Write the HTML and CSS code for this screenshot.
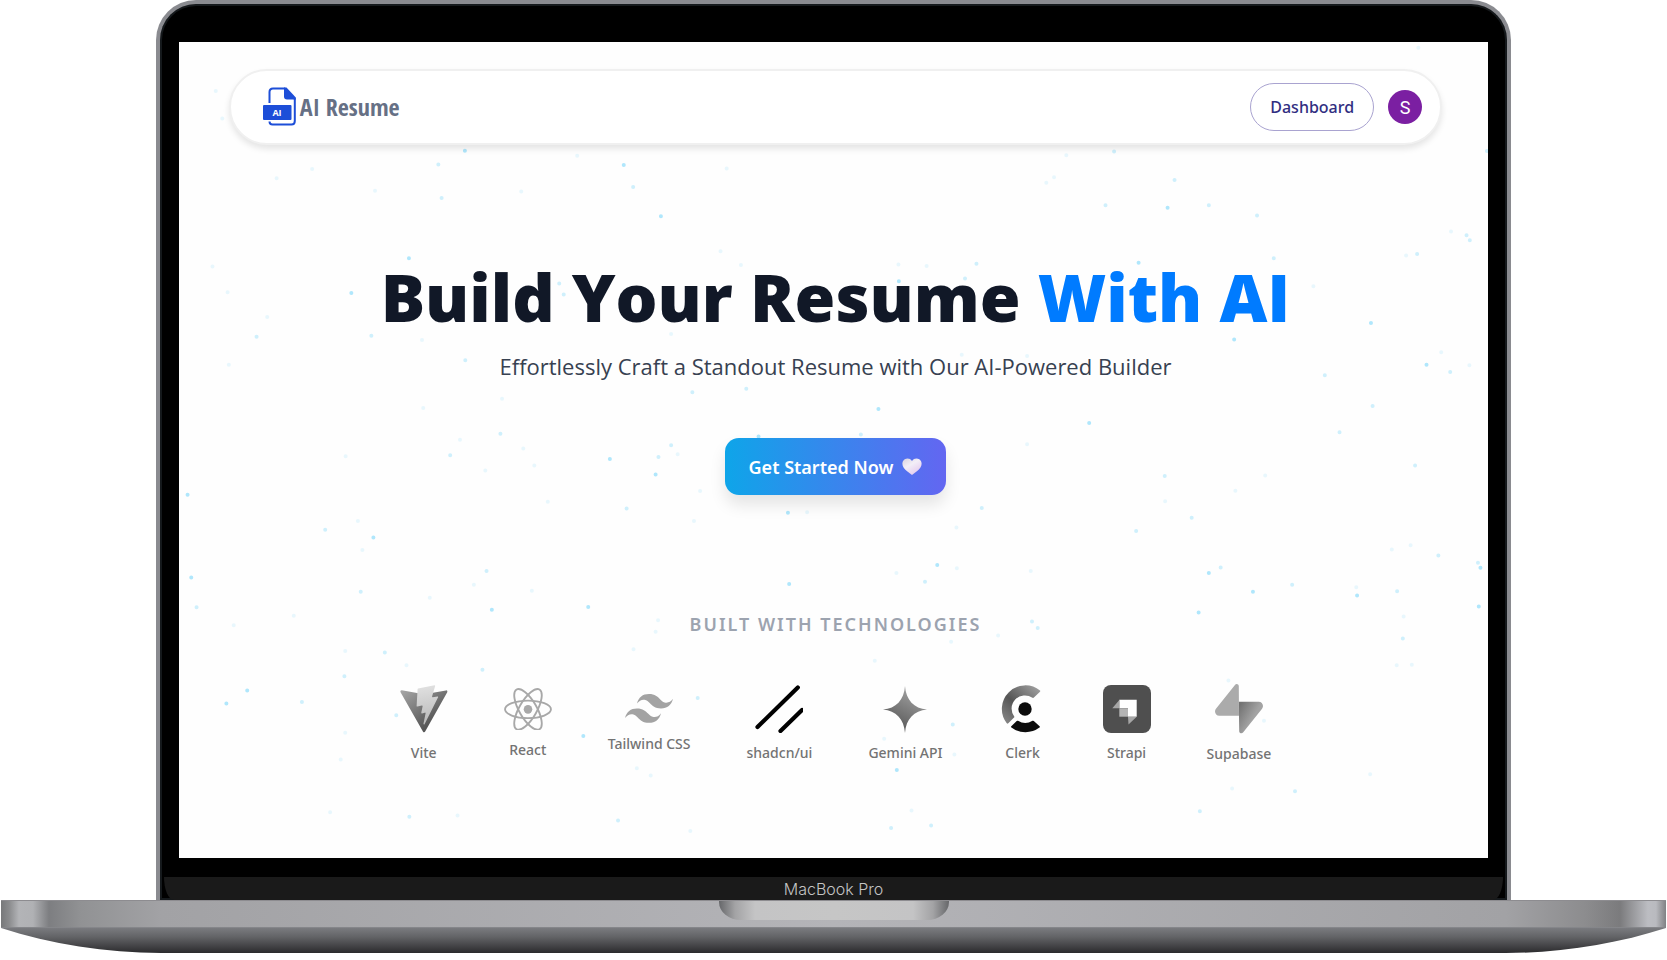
FILE: index.html
```html
<!DOCTYPE html>
<html lang="en">
<head>
<meta charset="utf-8">
<meta name="viewport" content="width=device-width, initial-scale=1">
<title>AI Resume</title>
<link rel="stylesheet" href="styles.css">
</head>
<body>
<div class="laptop">
  <div class="lid">
    <div class="screen">
      <svg class="particles" viewBox="0 0 1308 817" preserveAspectRatio="xMidYMin slice" aria-hidden="true">
        <g transform="translate(0 98) scale(.408 .459)">
          <path class="dot dot-strong" d="M700 23h0M1089 54h0M1180 166h0M563 257h0M422 333h0M1055 694h0M1167 728h0M21 772h0M476 865h0M30 952h0M766 1022h0M167 1198h0M116 1226h0M990 1297h0M1419 645h0M1494 966h0M1491 811h0M1002 1016h0"/>
          <path class="dot dot-mid" d="M635 53h0M643 126h0M1112 102h0M931 312h0M190 428h0M471 426h0M1389 541h0M787 639h0M664 686h0M1096 802h0M43 1017h0M445 983h0M504 1115h0M405 1167h0M532 1252h0M1270 1214h0M753 938h0M358 848h0M1257 549h0M701 479h0M1174 690h0M1205 664h0M301 1223h0M743 1153h0M1075 1481h0M564 1473h0M942 336h0"/>
          <path class="dot dot-faint" d="M326 63h0M975 34h0M1341 62h0M480 110h0M838 112h0M82 275h0M119 331h0M1376 272h0M1205 422h0M122 489h0M598 583h0M791 563h0M843 671h0M408 688h0M870 708h0M903 787h0M1276 764h0M1221 684h0M438 829h0M449 892h0M722 968h0M864 981h0M614 996h0M281 1035h0M134 1056h0M407 1112h0M557 1143h0M407 1290h0M396 1348h0M1121 1367h0M1155 1383h0M1252 1504h0M682 1470h0M370 1463h0M1261 829h0M1538 810h0M1113 1108h0M595 435h0M216 385h0M1326 242h0M239 83h0M750 719h0M688 652h0M1173 1045h0M1167 1070h0"/>
          <path class="dot dot-faint" d="M90 -107h0M106 -47h0"/>
        </g>
        <g transform="translate(671 98) scale(.408 .459)">
          <path class="dot dot-strong" d="M118 307h0M776 147h0M1274 398h0M939 434h0M68 585h0M584 616h0M212 925h0M985 983h0M1240 991h0M1542 931h0M1538 1015h0M852 1028h0M113 1371h0M877 942h0M1410 489h0M705 267h0"/>
          <path class="dot dot-mid" d="M645 25h0M793 87h0M624 142h0M877 142h0M995 164h0M1036 257h0M308 269h0M280 301h0M1516 218h0M1508 207h0M1468 505h0M1278 579h0M1197 636h0M1382 708h0M769 731h0M835 822h0M1439 904h0M1536 920h0M906 930h0M1081 968h0M1338 982h0M444 1048h0M458 1062h0M182 961h0M1088 1417h0M855 1461h0M99 1497h0M197 1492h0M1161 512h0M699 851h0M1387 248h0M321 801h0M25 641h0M250 1272h0M1352 1085h0M1558 24h0"/>
          <path class="dot dot-faint" d="M479 93h0M498 81h0M117 271h0M186 274h0M1360 251h0M1446 462h0M1515 490h0M432 662h0M1015 730h0M942 763h0M770 786h0M112 942h0M441 938h0M260 932h0M361 1078h0M1354 1037h0M1325 891h0M1371 882h0M254 1337h0M82 1303h0M149 1459h0M934 1411h0M1337 1143h0M1374 1142h0M528 33h0M1470 199h0M59 1133h0M1012 1264h0M925 1176h0M1272 1380h0M432 470h0M272 467h0M1133 318h0M259 843h0M246 1092h0M1238 973h0M1390 -201h0"/>
        </g>
      </svg>

      <header class="navbar">
        <a class="brand" href="#">
          <svg class="brand-mark" viewBox="0 0 34 40" aria-hidden="true">
            <path d="M6.500 16V5Q6.500 1.500 10 1.500H21.500L31.800 12V34Q31.800 37.500 28.500 37.500H9.500Q6.500 37.500 6.500 34.500" fill="none" stroke="#1d4ed8" stroke-width="2"/>
            <path d="M21 .5H23.500L32.800 10.500V12.500H24Q21 12.500 21 9.500Z" fill="#1d4ed8"/>
            <rect x="0" y="18" width="28.500" height="15" rx="1" fill="#1d4ed8"/>
            <text x="14" y="29" class="brand-mark-text">AI</text>
          </svg>
          <span class="brand-name">AI Resume</span>
        </a>
        <div class="nav-actions">
          <button class="dashboard" type="button">Dashboard</button>
          <button class="avatar" type="button">S</button>
        </div>
      </header>

      <main>
        <section class="hero">
          <h1>Build Your Resume <span class="accent">With AI</span></h1>
          <p class="tagline">Effortlessly Craft a Standout Resume with Our AI-Powered Builder</p>
          <button class="cta" type="button">
            <span>Get Started Now</span>
            <svg class="heart" viewBox="0 0 20 18" aria-hidden="true">
              <defs>
                <linearGradient id="heart" x1="0" y1="0" x2=".7" y2="1"><stop offset="0" stop-color="#d9d2de"/><stop offset=".45" stop-color="#f3eff7"/><stop offset="1" stop-color="#e3c9ee"/></linearGradient>
              </defs>
              <path d="M10 3C8.300 .2 5-.1 2.700 1.300C-.2 3.200-.2 7 1.700 9.800C3.600 12.500 7 14.800 10 17C13 14.800 16.400 12.500 18.300 9.800C20.200 7 20.200 3.200 17.300 1.300C15-.1 11.700 .2 10 3Z" fill="url(#heart)"/>
            </svg>
          </button>
        </section>

        <section class="tech">
          <h2>BUILT WITH TECHNOLOGIES</h2>
          <ul class="tech-list">
            <li>
              <svg class="icon" viewBox="6 0 400 396" aria-hidden="true">
                <defs>
                  <linearGradient id="vite-a" gradientUnits="userSpaceOnUse" x1="6" y1="33" x2="235" y2="344"><stop stop-color="#aaa"/><stop offset="1" stop-color="#555"/></linearGradient>
                  <linearGradient id="vite-b" gradientUnits="userSpaceOnUse" x1="194" y1="9" x2="236" y2="293"><stop stop-color="#e0e0e0"/><stop offset="1" stop-color="#bdbdbd"/></linearGradient>
                </defs>
                <path fill="url(#vite-a)" d="M399.641 59.525L215.643 388.545C211.844 395.338 202.084 395.378 198.228 388.618L10.582 59.556C6.381 52.190 12.680 43.267 21.028 44.759L205.223 77.682C206.398 77.892 207.601 77.890 208.776 77.676L389.119 44.806C397.439 43.289 403.768 52.143 399.641 59.525Z"/>
                <path fill="url(#vite-b)" d="M292.965 1.574L156.801 28.255C154.563 28.694 152.906 30.590 152.771 32.866L144.395 174.330C144.198 177.662 147.258 180.248 150.510 179.498L188.420 170.749C191.967 169.931 195.172 173.055 194.443 176.622L183.180 231.775C182.422 235.487 185.907 238.661 189.532 237.560L212.947 230.446C216.577 229.344 220.065 232.527 219.297 236.242L201.398 322.875C200.278 328.294 207.486 331.249 210.492 326.603L212.500 323.500L323.454 102.072C325.312 98.365 322.108 94.137 318.036 94.923L279.014 102.454C275.347 103.161 272.227 99.746 273.262 96.158L298.731 7.867C299.767 4.273 296.636 .855 292.965 1.574Z"/>
              </svg>
              <span>Vite</span>
            </li>
            <li>
              <svg class="icon" viewBox="-11.500 -10.232 23 20.463" aria-hidden="true">
                <circle r="2.050" fill="#a8a8a8"/>
                <g fill="none" stroke="#a8a8a8" stroke-width=".9"><ellipse rx="11" ry="4.200"/><ellipse rx="11" ry="4.200" transform="rotate(60)"/><ellipse rx="11" ry="4.200" transform="rotate(120)"/></g>
              </svg>
              <span>React</span>
            </li>
            <li>
              <svg class="icon" viewBox="0 0 54 33" aria-hidden="true">
                <path fill="#a3a3a3" d="M27 0c-7.200 0-11.700 3.600-13.500 10.800 2.700-3.600 5.850-4.950 9.450-4.050 2.054.513 3.522 2.004 5.147 3.653C30.744 13.090 33.808 16.200 40.500 16.200c7.200 0 11.700-3.600 13.500-10.800-2.700 3.600-5.850 4.950-9.450 4.050-2.054-.513-3.522-2.004-5.147-3.653C36.756 3.110 33.692 0 27 0zM13.500 16.200C6.300 16.200 1.800 19.800 0 27c2.700-3.600 5.850-4.950 9.450-4.050 2.054.514 3.522 2.004 5.147 3.653C17.244 29.290 20.308 32.400 27 32.400c7.200 0 11.700-3.600 13.500-10.800-2.700 3.600-5.850 4.950-9.450 4.050-2.054-.513-3.522-2.004-5.147-3.653C23.256 19.310 20.192 16.200 13.500 16.200z"/>
              </svg>
              <span>Tailwind CSS</span>
            </li>
            <li>
              <svg class="icon" viewBox="0 0 48 48" aria-hidden="true">
                <path d="M2.500 42L42.800 2.500M25.500 46L47 25" fill="none" stroke="#000" stroke-width="4.200" stroke-linecap="round"/>
              </svg>
              <span>shadcn/ui</span>
            </li>
            <li>
              <svg class="icon" viewBox="0 0 48 48" aria-hidden="true">
                <defs><linearGradient id="gemini" x1=".8" y1=".1" x2=".4" y2=".9"><stop stop-color="#a3a3a3"/><stop offset="1" stop-color="#5c5c5c"/></linearGradient></defs>
                <path fill="url(#gemini)" d="M24 1C25 15 33 23.500 46 24.500C33 25.500 25 34 24 48C23 34 15 25.500 2 24.500C15 23.500 23 15 24 1Z"/>
              </svg>
              <span>Gemini API</span>
            </li>
            <li>
              <svg class="icon" viewBox="0 0 48 48" aria-hidden="true">
                <defs><linearGradient id="clerk" x1=".9" y1="0" x2=".1" y2=".9"><stop stop-color="#a0a0a0"/><stop offset=".6" stop-color="#555"/><stop offset="1" stop-color="#808080"/></linearGradient></defs>
                <path fill="url(#clerk)" d="M41 5.500A23.500 23.500 0 0 0 7.800 38.300Q8.500 39 9.300 38.200L15.500 32A13.300 13.300 0 0 1 33.500 12.800Q34.300 13.200 34.900 12.600L41 6.700Q41.600 6 41 5.500Z"/>
                <circle cx="26" cy="24" r="6.700" fill="#0c0c0c"/>
                <path fill="#0c0c0c" d="M12.300 41.300L17.700 36Q18.300 35.400 19 35.800A13.500 13.500 0 0 0 33.500 35.800Q34.200 35.400 34.800 36L40.600 41.300Q41.200 42 40.500 42.500A23.500 23.500 0 0 1 12.400 42.500Q11.700 42 12.300 41.300Z"/>
              </svg>
              <span>Clerk</span>
            </li>
            <li>
              <svg class="icon" viewBox="0 0 48 48" aria-hidden="true">
                <rect width="48" height="48" rx="8" fill="#4f4f4f"/>
                <path fill="#fff" d="M16.300 14.700H33.700V31.700H25V23.300H16.300Z"/>
                <path fill="#b4b4b4" d="M16.300 23.300H25V31.700H16.300Z"/>
                <path fill="#a6a6a6" d="M16.300 15V23.300H9.300ZM25 31.700H33.700L25.500 39.500Z"/>
              </svg>
              <span>Strapi</span>
            </li>
            <li>
              <svg class="icon" viewBox="0 0 109 113" aria-hidden="true">
                <defs><linearGradient id="supa" x1=".05" y1=".1" x2=".6" y2=".5"><stop stop-color="#737373"/><stop offset="1" stop-color="#a3a3a3"/></linearGradient></defs>
                <path fill="url(#supa)" d="M63.708 110.284C60.848 113.885 55.050 111.912 54.981 107.314L53.974 40.063L99.194 40.063C107.384 40.063 111.952 49.523 106.859 55.937L63.708 110.284Z"/>
                <path fill="#ababab" d="M45.317 2.071C48.177-1.530 53.975.443 54.043 5.041L54.485 72.292H9.831C1.640 72.292-2.928 62.832 2.166 56.418L45.317 2.071Z"/>
              </svg>
              <span>Supabase</span>
            </li>
          </ul>
        </section>
      </main>
    </div>
    <div class="chin">MacBook Pro</div>
  </div>
  <div class="base"><div class="notch"></div></div>
  <svg class="underside" viewBox="0 0 1665 25" preserveAspectRatio="none" aria-hidden="true">
    <defs><linearGradient id="under" x1="0" y1="0" x2="0" y2="1"><stop stop-color="#7a7b7f"/><stop offset=".35" stop-color="#636467"/><stop offset="1" stop-color="#2b2b2d"/></linearGradient></defs>
    <path fill="url(#under)" d="M0 0H1665C1615 16 1560 25 1505 25H160C105 25 50 16 0 0Z"/>
  </svg>
</div>
</body>
</html>
```
FILE: styles.css
```css
* {
  box-sizing: border-box;
}

body {
  margin: 0;
  background: #fff;
  font-family: "Open Sans", "Noto Sans", sans-serif;
}

button {
  font-family: inherit;
  cursor: pointer;
}

.laptop {
  display: flex;
  flex-direction: column;
  align-items: center;
  padding: 0 1px;
}

/* Lid and display */
.lid {
  width: 81.4%;
  padding: 38px 19px 0;
  border: 4px solid #8a8b90;
  border-bottom: 0;
  border-radius: 40px 40px 0 0;
  background: #000;
  box-shadow: inset 0 0 0 2px #15191c;
}

.screen {
  position: relative;
  overflow: hidden;
  padding: 27px 46px 94px 50px;
  background: #fefefe;
}

.particles {
  position: absolute;
  inset: 0;
  width: 100%;
  height: 100%;
}

.dot {
  fill: none;
  stroke: #7dd8fb;
  stroke-width: 4px;
  stroke-linecap: round;
  vector-effect: non-scaling-stroke;
}

.dot-strong {
  opacity: 0.6;
}

.dot-mid {
  opacity: 0.36;
}

.dot-faint {
  opacity: 0.16;
}

.chin {
  margin: 19px -15px 0;
  height: 23px;
  border-radius: 0 0 10px 10px / 0 0 23px 23px;
  background: #1a1a1a;
  color: #c4c4c4;
  font: 300 16px/24px Inter, sans-serif;
  text-align: center;
}

.base {
  display: flex;
  justify-content: center;
  width: 100%;
  height: 28px;
  border-top: 1px solid #8d8c90;
  border-bottom: 1px solid #85868a;
  background: linear-gradient(90deg, #77787a 0, #8a8b8d 8px, #b3b4b7 18px, #b0b1b4 32px, #7d7e81 48px, #919294 80px, #a2a2a5 160px, #b4b4b8 50%, #a2a2a5 calc(100% - 160px), #8c8c8e calc(100% - 80px), #7b7b7d calc(100% - 46px), #bcbdc2 calc(100% - 18px), #b9babf calc(100% - 10px), #808184 100%);
}

.notch {
  width: 230px;
  height: 19px;
  border-radius: 0 0 22px 22px / 0 0 18px 18px;
  background: linear-gradient(90deg, #66676a, #a3a3a5 16px, #c4c4c5 36px, #c6c6c6 50%, #c4c4c5 calc(100% - 36px), #a3a3a5 calc(100% - 16px), #66676a);
}

.underside {
  display: block;
  width: 100%;
  height: 25px;
}

/* Navigation */
.navbar {
  position: relative;
  display: flex;
  align-items: center;
  justify-content: space-between;
  height: 76px;
  padding: 0 18px 0 32px;
  border: 2px solid #f0f0f0;
  border-radius: 38px;
  background: #fff;
  box-shadow: 0 4px 6px rgba(0, 0, 0, 0.1);
}

.brand {
  display: flex;
  align-items: center;
  gap: 3px;
  text-decoration: none;
}

.brand-mark {
  width: 34px;
  height: 40px;
}

.brand-mark-text {
  fill: #fff;
  font: 700 9px "Open Sans", sans-serif;
  text-anchor: middle;
}

.brand-name {
  color: #667085;
  font: 600 24px/32px "Open Sans Condensed", "Roboto Condensed", sans-serif;
}

.nav-actions {
  display: flex;
  align-items: center;
  gap: 14px;
}

.dashboard {
  height: 48px;
  padding: 0 19px;
  border: 1px solid #a9a3d0;
  border-radius: 24px;
  background: #fff;
  color: #312e81;
  font: 500 16px "Noto Sans", sans-serif;
}

.avatar {
  width: 34px;
  height: 34px;
  padding: 0;
  border: 0;
  border-radius: 50%;
  background: #7b1fa2;
  color: #fff;
  font: 400 18px Roboto, sans-serif;
}

/* Hero */
main {
  position: relative;
}

.hero {
  display: flex;
  flex-direction: column;
  align-items: center;
  padding-top: 115px;
  text-align: center;
}

h1 {
  margin: 0;
  color: #111827;
  font-size: 66px;
  font-weight: 800;
  line-height: 72px;
}

.accent {
  color: #007bff;
}

.tagline {
  margin: 18px 0 0;
  color: #374151;
  font-size: 22px;
  line-height: 32px;
}

.cta {
  display: flex;
  align-items: center;
  gap: 9px;
  height: 57px;
  margin-top: 56px;
  padding: 0 24px;
  border: 0;
  border-radius: 14px;
  background: linear-gradient(90deg, #0ea5e9, #6366f1);
  box-shadow: 0 10px 16px rgba(0, 0, 0, 0.1);
  color: #fff;
  font: 600 18px "Noto Sans", sans-serif;
}

.heart {
  width: 20px;
  height: 18px;
}

/* Technologies */
.tech {
  padding-top: 115px;
}

h2 {
  margin: 0;
  color: #9ca3af;
  font: 600 18px/28px "Noto Sans", sans-serif;
  letter-spacing: 2px;
  text-align: center;
}

.tech-list {
  display: flex;
  flex-wrap: wrap;
  align-items: center;
  justify-content: center;
  gap: 24px 56px;
  margin: 46px 0 0;
  padding: 0;
  list-style: none;
}

.tech-list li {
  display: flex;
  flex-direction: column;
  align-items: center;
  gap: 10px;
  color: #737373;
  font: 500 14px/20px "Noto Sans", sans-serif;
}

.icon {
  display: block;
  width: 48px;
  height: auto;
}
```
